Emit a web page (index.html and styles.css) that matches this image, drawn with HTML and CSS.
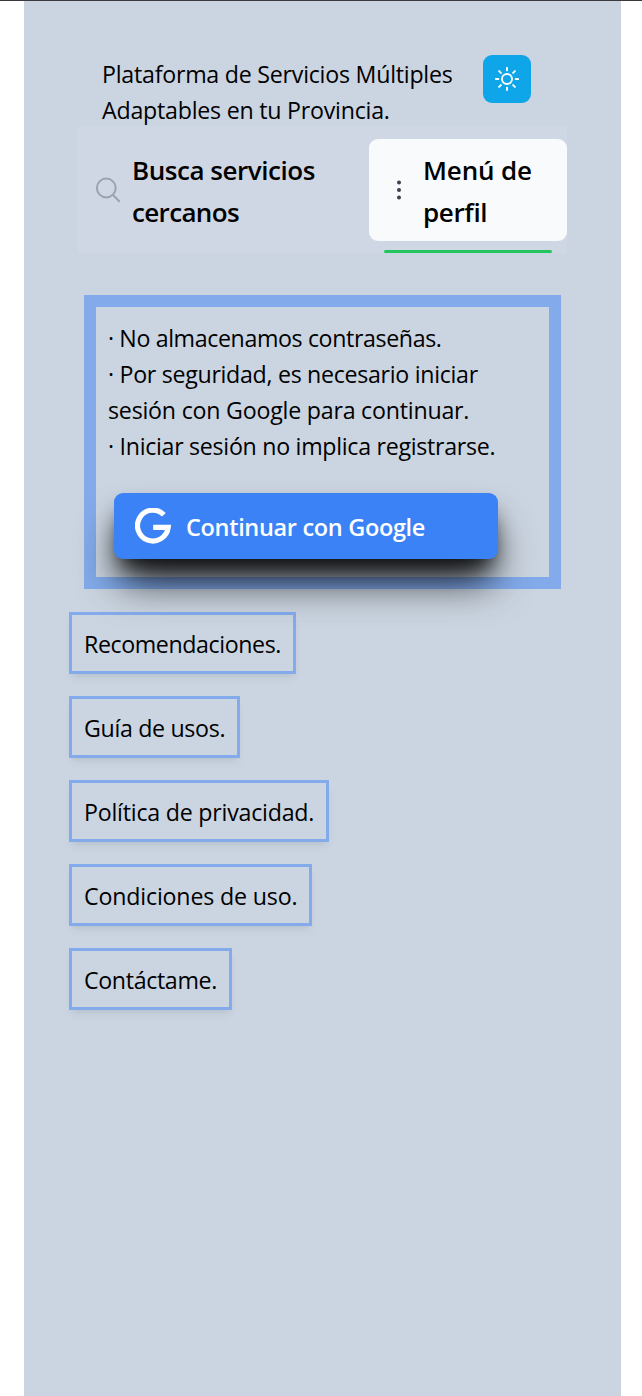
FILE: index.html
```html
<!DOCTYPE html>
<html lang="es">
<head>
<meta charset="utf-8">
<title>Plataforma de Servicios</title>
<link rel="stylesheet" href="styles.css">
</head>
<body>
<main class="page">
  <header class="header">
    <p class="tagline"><span class="t1">Plataforma de Servicios Múltiples</span><br><span class="t2">Adaptables en tu Provincia.</span></p>
    <button class="theme" aria-label="Tema">
      <svg width="24" height="24" viewBox="0 0 24 24" fill="none" stroke="#fff" stroke-width="1.9" stroke-linecap="round"><circle cx="12" cy="12" r="5"/><path d="M12 .9v2.5M12 20.6v2.5M.9 12h2.5M20.6 12h2.5M4.1 4.1l1.8 1.8M18.1 18.1l1.8 1.8M4.1 19.9l1.8-1.8M18.1 5.9l1.8-1.8"/></svg>
    </button>
  </header>
  <nav class="nav">
    <a class="tab search">
      <svg class="lens" width="26" height="26" viewBox="0 0 26 26" fill="none" stroke="#9ca3af" stroke-width="2" stroke-linecap="round"><circle cx="11.3" cy="11" r="9.4"/><path d="M18 18l6.2 6.2"/></svg>
      <span class="label">Busca servicios<br><span class="tight">cercanos</span></span>
    </a>
    <a class="tab menu">
      <svg class="dots" width="6" height="20" viewBox="0 0 6 20" fill="#374151"><circle cx="3" cy="2.5" r="2"/><circle cx="3" cy="10" r="2"/><circle cx="3" cy="17.5" r="2"/></svg>
      <span class="label wide">Menú de<br><span class="tight">perfil</span></span>
      <i class="bar"></i>
    </a>
  </nav>
  <section class="panel">
    <p class="notes"><span class="n1">· No almacenamos contraseñas.</span><br><span class="n2">· Por seguridad, es necesario iniciar</span><br><span class="n3">sesión con Google para continuar.</span><br><span class="n4">· Iniciar sesión no implica registrarse.</span></p>
    <button class="google">
      <svg width="36" height="36" viewBox="0 0 36 36" fill="none" stroke="#fff" stroke-width="5.2"><path d="M28.9 6.8A15.4 15.4 0 1 0 33.2 19.3H18.2"/></svg>
      <span>Continuar con Google</span>
    </button>
  </section>
  <div class="links">
    <a class="link l1">Recomendaciones.</a>
    <a class="link l2">Guía de usos.</a>
    <a class="link l3">Política de privacidad.</a>
    <a class="link l4">Condiciones de uso.</a>
    <a class="link l5">Contáctame.</a>
  </div>
</main>
</body>
</html>
```
FILE: styles.css
```css
* { box-sizing: border-box; }
body {
  margin: 0;
  height: 1396px;
  overflow: hidden;
  border-top: 1px solid #3b383e;
  background: #fff;
  color: #000;
  font: 23.2px/36px "Open Sans", "Noto Sans", sans-serif;
}
p { margin: 0; white-space: nowrap; }
button { border: 0; padding: 0; font: inherit; }
svg { display: block; flex: none; }
.page { width: 597px; height: 1395px; margin-left: 24px; padding-top: 54px; background: #cbd5e1; }
.header { display: flex; height: 71px; padding-left: 78px; }
.tagline { width: 381px; padding-top: 1px; }
.t1 { letter-spacing: -.24px; }
.t2 { letter-spacing: -.23px; }
.theme { display: flex; align-items: center; justify-content: center; width: 48px; height: 48px; border-radius: 9px; background: #0ea5e9; }
.nav { display: flex; width: 489px; height: 127px; margin-left: 54px; padding-top: 13px; background: #d0d7e4; }
.tab { display: flex; align-items: center; height: 102px; }
.label { padding-top: 2px; font-size: 26px; line-height: 42px; font-weight: 600; white-space: nowrap; letter-spacing: -.45px; }
.wide { letter-spacing: -.15px; }
.tight { letter-spacing: -.65px; }
.wide .tight { letter-spacing: -.35px; }
.search { width: 291px; padding-left: 17px; gap: 11px; }
.menu { position: relative; width: 198px; padding-left: 27px; gap: 21px; border-radius: 9px; background: #f8fafc; }
.bar { position: absolute; left: 15px; right: 15px; bottom: -12px; height: 3px; border-radius: 2px; background: #22c55e; }
.panel { width: 477px; height: 294px; margin: 42px 0 0 60px; padding: 13px 12px 0; border: 12px solid rgba(59, 130, 246, .5); }
.n1 { letter-spacing: -.38px; }
.n2 { letter-spacing: -.3px; }
.n3 { letter-spacing: -.22px; }
.n4 { letter-spacing: -.29px; }
.google { display: flex; align-items: center; gap: 15px; width: 384px; height: 66px; margin: 29px 0 0 6px; padding-left: 21px; border-radius: 9px; background: #3b82f6; color: #fff; font-size: 23.5px; font-weight: 600; box-shadow: 0 28px 42px -7px rgba(0, 0, 0, .85), 0 14px 22px -8px rgba(0, 0, 0, .9); }
.google span { white-space: nowrap; letter-spacing: -.33px; padding-top: 1px; }
.links { display: flex; flex-direction: column; align-items: flex-start; gap: 22px; margin: 23px 0 0 45px; }
.link { height: 62px; padding: 11px 0 0 12px; border: 3px solid rgba(59, 130, 246, .5); white-space: nowrap; box-shadow: 0 6px 9px -1.5px rgba(0, 0, 0, .06), 0 3px 6px -3px rgba(0, 0, 0, .06); }
.l1 { width: 227px; letter-spacing: -.4px; }
.l2 { width: 171px; letter-spacing: -.33px; }
.l3 { width: 260px; letter-spacing: -.22px; }
.l4 { width: 243px; letter-spacing: -.17px; }
.l5 { width: 163px; letter-spacing: -.35px; }
```
